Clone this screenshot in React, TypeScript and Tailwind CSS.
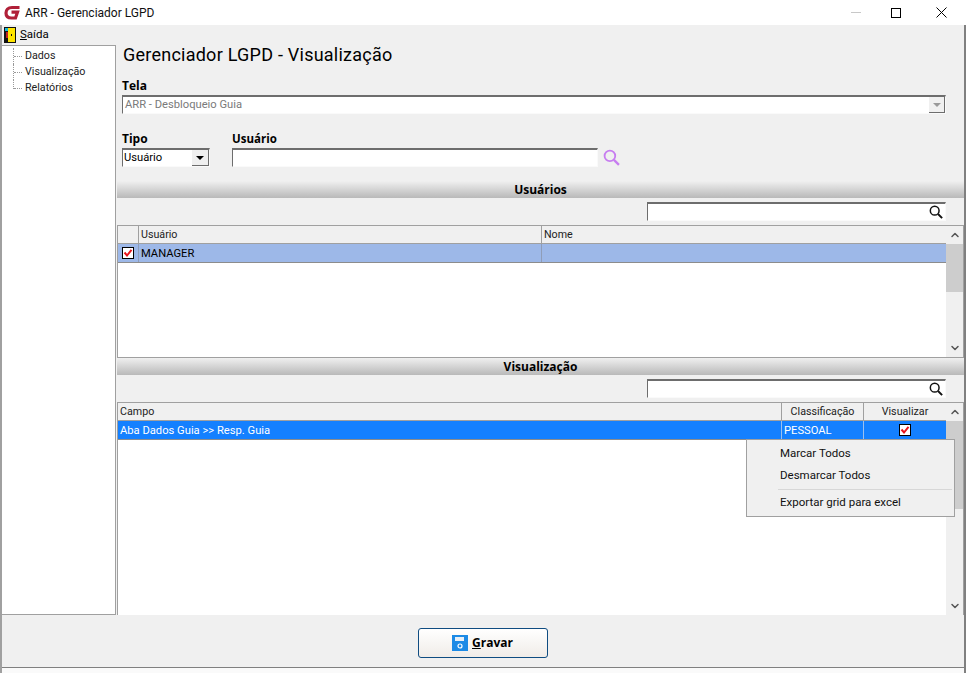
import { ChevronDown, ChevronUp } from "lucide-react";

const SearchGlass = ({ color, size }: { color: string; size: number }) => (
  <svg width={size} height={size} viewBox="0 0 16 16" fill="none">
    <circle cx="6.5" cy="6.5" r="5" stroke={color} strokeWidth="1.7" />
    <path d="M10.3 10.3 L15 15" stroke={color} strokeWidth="2.2" />
  </svg>
);

const Check = () => (
  <span className="flex h-[12px] w-[12px] items-center justify-center border border-black bg-white">
    <svg width="10" height="10" viewBox="0 0 10 10" fill="none">
      <path d="M1.5 4.5 L4 7.5 L8.5 1.8" stroke="#e8141c" strokeWidth="2" />
    </svg>
  </span>
);

const Scrollbar = ({ thumb }: { thumb: string }) => (
  <div className="flex w-[17px] shrink-0 flex-col bg-[#f0f0f0]">
    <div className="flex h-[18px] shrink-0 items-center justify-center">
      <ChevronUp size={12} strokeWidth={3} color="#555" />
    </div>
    <div className="min-h-0 flex-1">
      <div className={`${thumb} bg-[#cdcdcd]`} />
    </div>
    <div className="flex h-[18px] shrink-0 items-center justify-center">
      <ChevronDown size={12} strokeWidth={3} color="#555" />
    </div>
  </div>
);

const SectionBar = ({ title }: { title: string }) => (
  <div className="flex h-[17px] items-center justify-center bg-gradient-to-b from-[#f0f0f0] to-[#b9b9b9] font-['Open_Sans'] text-[12px] font-bold text-black">
    {title}
  </div>
);

const Field = ({ className, children }: { className: string; children?: React.ReactNode }) => (
  <div className={`${className} flex h-[19px] items-center border-t-2 border-r border-b border-l border-t-[#6d6d6d] border-r-[#fafafa] border-b-[#fafafa] border-l-[#6d6d6d] bg-white`}>
    {children}
  </div>
);

const FilterBox = () => (
  <div className="flex h-[23px] items-end justify-end pr-[18px]">
    <Field className="w-[299px] justify-end pr-[2px]">
      <SearchGlass color="#111" size={14} />
    </Field>
  </div>
);

const TreeItem = ({ label, last }: { label: string; last?: boolean }) => (
  <div className="flex h-4 items-start">
    <span className={`ml-[11px] flex w-[9px] border-l border-dotted border-[#999] ${last ? "h-[9px] items-end" : "h-4 items-center"}`}>
      <span className="w-full border-t border-dotted border-[#999]" />
    </span>
    <span className="ml-[3px] text-[10.7px] leading-4 text-[#222]">{label}</span>
  </div>
);

const MenuItem = ({ label }: { label: string }) => (
  <div className="flex h-[22px] items-center pl-[33px]">{label}</div>
);

export default function App() {
  return (
    <div className="flex h-[673px] w-[970px] flex-col overflow-hidden bg-white font-['Roboto',sans-serif] text-[11.2px] text-black">
      {/* titulo */}
      <div className="flex h-[25px] shrink-0 items-center bg-white">
        <svg className="ml-[4px]" width="17" height="17" viewBox="0 0 17 17" fill="none">
          <path d="M15.5 3.5 H8 C4 3.5 2 6 2 9 C2 12.5 4.5 14 7.5 14 H11.5 L13.5 8.2 H7.5" stroke="#b02038" strokeWidth="3.2" />
        </svg>
        <span className="ml-[4px] text-[12px] text-[#111]">ARR - Gerenciador LGPD</span>
        <div className="ml-auto flex items-center">
          <span className="mr-[30px] w-[10px] border-t border-[#c8c8c8]" />
          <span className="mr-[35px] h-[10px] w-[10px] border border-black" />
          <svg className="mr-[23px]" width="11" height="11" viewBox="0 0 11 11">
            <path d="M0.5 0.5 L10.5 10.5 M10.5 0.5 L0.5 10.5" stroke="#000" strokeWidth="1" />
          </svg>
        </div>
      </div>

      <div className="mr-[4px] flex min-h-0 flex-1 flex-col border-r-2 border-l-2 border-r-[#808080] border-l-[#a0a0a0] bg-[#f0f0f0]">
        {/* menu */}
        <div className="flex h-[20px] shrink-0 items-center pl-[2px]">
          <svg width="12" height="16" viewBox="0 0 12 16">
            <rect width="12" height="16" fill="#111" />
            <rect x="4" y="1" width="7" height="14" fill="#ffe500" />
            <rect x="1" y="1" width="3" height="3" fill="#18b8d8" />
            <rect x="2" y="5" width="2" height="6" fill="#c02020" />
            <rect x="7" y="7" width="1" height="2" fill="#111" />
          </svg>
          <span className="ml-[4px] text-[11.5px]"><u>S</u>aída</span>
        </div>

        <div className="relative flex min-h-0 flex-1">
          {/* arvore */}
          <div className="w-[114px] shrink-0 border-t border-r border-b border-[#a0a0a0] bg-white pt-[2px]">
            <TreeItem label="Dados" />
            <TreeItem label="Visualização" />
            <TreeItem label="Relatórios" last />
          </div>

          <div className="flex min-w-0 flex-1 flex-col pl-[1px]">
            <div className="px-[5px]">
              <h1 className="pl-[1px] text-[18px] leading-[19px] tracking-[0.24px] text-black">Gerenciador LGPD - Visualização</h1>
              <div className="mt-[14px] font-['Open_Sans'] text-[12px] leading-[16px] font-bold">Tela</div>
              <Field className="relative mt-[1px] mr-[13px]">
                <span className="pl-[2px] text-[#7a7a7a]">ARR - Desbloqueio Guia</span>
                <span className="absolute top-0 right-0 flex h-[16px] w-[16px] items-center justify-center border-r border-b border-[#6d6d6d] bg-[#f0f0f0]">
                  <span className="border-x-[4px] border-t-[4px] border-x-transparent border-t-[#999]" />
                </span>
              </Field>
              <div className="mt-[16px] flex gap-[22px]">
                <div className="w-[88px]">
                  <div className="font-['Open_Sans'] text-[12px] leading-[18px] font-bold">Tipo</div>
                  <Field className="justify-between">
                    <span className="pl-[1px]">Usuário</span>
                    <span className="flex h-[16px] w-[17px] items-center justify-center border-r border-b border-[#6d6d6d] bg-[#f0f0f0]">
                      <span className="border-x-[4px] border-t-[4px] border-x-transparent border-t-black" />
                    </span>
                  </Field>
                </div>
                <div>
                  <div className="font-['Open_Sans'] text-[11.5px] leading-[18px] font-bold">Usuário</div>
                  <div className="flex items-center">
                    <Field className="w-[366px]" />
                    <span className="ml-[5px]"><SearchGlass color="#c77df0" size={17} /></span>
                  </div>
                </div>
              </div>
            </div>

            <div className="mt-[14px]"><SectionBar title="Usuários" /></div>
            <FilterBox />
            <div className="mt-[4px] flex h-[133px] shrink-0 border border-[#a0a0a0] bg-white">
              <div className="flex min-w-0 flex-1 flex-col">
                <div className="flex h-[18px] shrink-0 border-b border-[#a0a0a0] bg-[#f0f0f0] text-[10.7px] leading-[17px] text-[#222]">
                  <div className="w-[21px] border-r border-[#a0a0a0]" />
                  <div className="w-[403px] border-r border-[#a0a0a0] pl-[2px]">Usuário</div>
                  <div className="flex-1 pl-[2px]">Nome</div>
                </div>
                <div className="flex h-[19px] shrink-0 border-b border-[#8c8c8c] bg-[#9db8e8]">
                  <div className="flex w-[21px] items-center justify-center border-r border-[#8f9db8]"><Check /></div>
                  <div className="w-[403px] border-r border-[#8f9db8] pl-[2px] leading-[19px]">MANAGER</div>
                </div>
              </div>
              <Scrollbar thumb="h-[48px]" />
            </div>

            <SectionBar title="Visualização" />
            <FilterBox />
            <div className="mt-[4px] flex min-h-0 flex-1 border border-b-0 border-[#a0a0a0] bg-white">
              <div className="flex min-w-0 flex-1 flex-col">
                <div className="flex h-[18px] shrink-0 border-b border-[#a0a0a0] bg-[#f0f0f0] text-[10.7px] leading-[17px] text-[#222]">
                  <div className="flex-1 border-r border-[#a0a0a0] pl-[2px]">Campo</div>
                  <div className="w-[82px] border-r border-[#a0a0a0] text-center">Classificação</div>
                  <div className="w-[82px] text-center">Visualizar</div>
                </div>
                <div className="flex h-[19px] shrink-0 border-b border-[#8c8c8c] bg-[#1480ff] leading-[19px] text-white">
                  <div className="flex-1 border-r border-[#9cc0ee] pl-[2px]">Aba Dados Guia &gt;&gt; Resp. Guia</div>
                  <div className="w-[82px] border-r border-[#9cc0ee] pl-[2px]">PESSOAL</div>
                  <div className="flex w-[82px] items-center justify-center"><Check /></div>
                </div>
              </div>
              <Scrollbar thumb="h-[88px]" />
            </div>
          </div>

          {/* menu de contexto */}
          <div className="absolute top-[394px] left-[744px] w-[209px] border border-[#a0a0a0] bg-[#f0f0f0] pt-[3px] pb-[2px] text-[11.5px] text-[#111]">
            <MenuItem label="Marcar Todos" />
            <MenuItem label="Desmarcar Todos" />
            <div className="my-[2px] mr-[2px] ml-[31px] border-t border-[#d7d7d7]" />
            <MenuItem label="Exportar grid para excel" />
          </div>
        </div>

        {/* rodape */}
        <div className="flex h-[52px] shrink-0 items-center justify-center pt-[3px] pr-[1px]">
          <button className="flex h-[30px] w-[130px] items-center justify-center rounded-[3px] border border-[#0f4c81] bg-gradient-to-b from-white to-[#f0ece8] font-['Open_Sans'] text-[12px] font-bold">
            <svg width="16" height="16" viewBox="0 0 16 16">
              <rect width="16" height="16" fill="#1c8ae6" />
              <rect x="3" y="2" width="9" height="4" fill="#e6eef6" />
              <circle cx="8" cy="11" r="2" fill="none" stroke="#fff" strokeWidth="1.2" />
            </svg>
            <span className="ml-[4px]"><u>G</u>ravar</span>
          </button>
        </div>
        <div className="h-[6px] shrink-0 border-t border-[#808080] bg-[#fafafa]" />
      </div>
    </div>
  );
}
